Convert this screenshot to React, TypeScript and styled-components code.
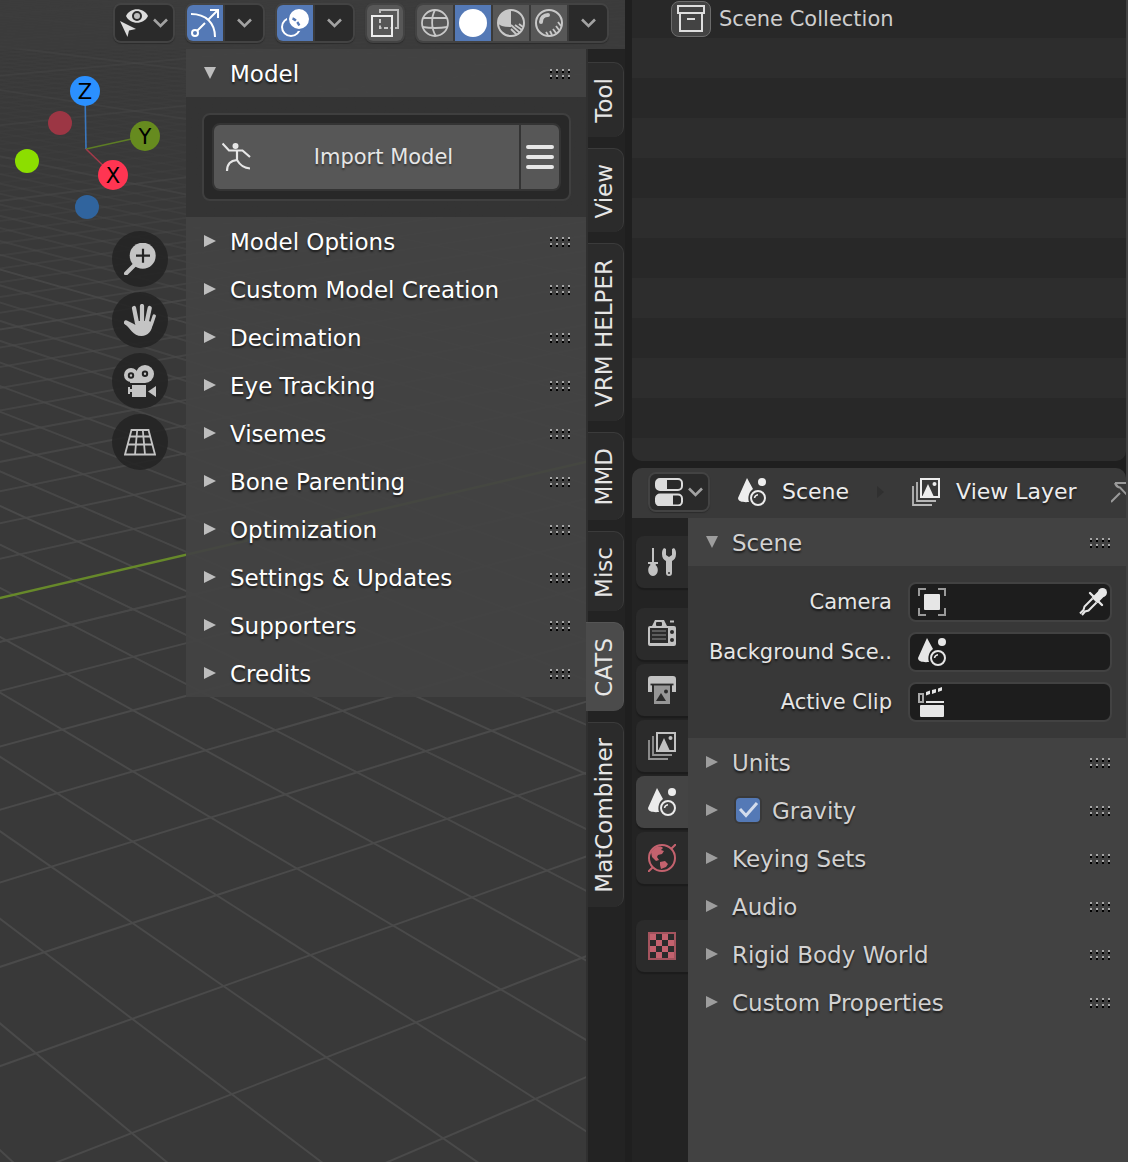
import React, { useState } from "react";
import styled, { createGlobalStyle, css } from "styled-components";

const Global = createGlobalStyle`
  *, *::before, *::after { box-sizing: border-box; }
  html, body { margin: 0; background: #1f1f1f; }
  body, button, input {
    font-family: "DejaVu Sans", "Liberation Sans", sans-serif;
  }
  button { margin: 0; padding: 0; border: 0; background: none; color: inherit; cursor: pointer; }
`;

const BLUE = "#5479b6";

/* ---------- layout ---------- */

const Screen = styled.div`
  display: grid;
  grid-template-columns: minmax(0, 625fr) minmax(0, 494fr);
  gap: 7px;
  min-height: 100vh;
  border-right: 2px solid #424242;
  background: #1f1f1f;
  overflow: hidden;
`;

const Viewport = styled.section`
  position: relative;
  display: flex;
  flex-direction: column;
  background: #393939;
  overflow: hidden;
`;

const Floor = styled.svg`
  position: absolute;
  inset: 0;
  width: 100%;
  height: 100%;
`;

const ViewportHeader = styled.header`
  position: relative;
  display: flex;
  justify-content: flex-end;
  gap: 10px;
  height: 49px;
  padding: 3px 16px 0 0;
  background: rgba(60, 60, 60, 0.8);
`;

const ViewportBody = styled.div`
  position: relative;
  display: flex;
  flex: 1;
`;

const Canvas = styled.div`
  position: relative;
  flex: 1;
  min-width: 0;
`;

const Gizmo = styled.svg`
  position: absolute;
  top: 21px;
  left: 10px;
  text {
    font: 21px "DejaVu Sans", sans-serif;
    text-anchor: middle;
    fill: #000;
  }
`;

const NavButtons = styled.div`
  position: absolute;
  top: 182px;
  right: 18px;
  display: flex;
  flex-direction: column;
  gap: 5px;
`;

const NavButton = styled.button`
  display: grid;
  place-items: center;
  width: 56px;
  height: 56px;
  border-radius: 50%;
  background: rgba(35, 35, 35, 0.86);
  color: #c4c4c4;
`;

/* ---------- header buttons ---------- */

const Group = styled.div`
  display: flex;
  flex: none;
  gap: 2px;
  height: 40px;
  border: 2px solid #434343;
  border-radius: 8px;
  background: #3a3a3a;
  overflow: hidden;
  box-shadow: 0 1px 1px #2c2c2c;
`;

type Tone = "dark" | "mid" | "on";
const tones = { dark: "#2a2a2a", mid: "#575757", on: BLUE };

const ToolButton = styled.button<{ $tone: Tone; $wide?: boolean }>`
  display: flex;
  align-items: center;
  justify-content: center;
  gap: 5px;
  width: ${(p) => (p.$wide ? 38 : 36)}px;
  background: ${(p) => tones[p.$tone]};
  color: ${(p) => (p.$tone === "on" ? "#fff" : "#c8c8c8")};
`;

const MenuButton = styled(ToolButton)`
  width: 58px;
  color: #dcdcdc;
`;

/* ---------- panels ---------- */

const Sidebar = styled.aside`
  width: 400px;
  flex: none;
`;

const Row = styled.div<{ $bright?: boolean }>`
  display: flex;
  align-items: center;
  height: 48px;
  padding: 2px 16px 0 18px;
  background: ${(p) => (p.$bright ? "rgba(67, 67, 67, 0.94)" : "#424242")};
  color: ${(p) => (p.$bright ? "#fff" : "#d2d2d2")};
`;

const Toggle = styled.button<{ $grow?: boolean }>`
  display: flex;
  align-items: center;
  gap: 14px;
  height: 46px;
  ${(p) => p.$grow && css`flex: 1;`}
  font-size: 23px;
  line-height: 46px;
  text-align: left;
  white-space: nowrap;
  text-shadow: 0 2px 2px rgba(0, 0, 0, 0.6);
  svg { margin-bottom: 2px; }
`;

const CheckLabel = styled.label`
  display: flex;
  align-items: center;
  flex: 1;
  gap: 12px;
  padding-left: 18px;
  font-size: 23px;
  line-height: 46px;
  text-shadow: 0 2px 2px rgba(0, 0, 0, 0.6);
`;

const CheckWrap = styled.span`
  position: relative;
  display: block;
  width: 24px;
  height: 24px;
  margin-bottom: 2px;
  svg { position: absolute; inset: 0; pointer-events: none; }
`;

const Checkbox = styled.input`
  appearance: none;
  display: block;
  width: 24px;
  height: 24px;
  margin: 0;
  border-radius: 4px;
  background: #575757;
  box-shadow: 0 0 0 2px #393939;
  &:checked { background: ${BLUE}; }
`;

const ImportBody = styled.div`
  height: 120px;
  padding: 16px 15px 16px 16px;
  background: rgba(52, 52, 52, 0.97);
`;

const ImportBox = styled.div`
  height: 88px;
  padding: 8px;
  border: 2px solid #3f3f3f;
  border-radius: 8px;
  background: #282828;
`;

const ImportGroup = styled.div`
  display: flex;
  gap: 2px;
  height: 68px;
  border: 2px solid #343434;
  border-radius: 8px;
  background: #343434;
  overflow: hidden;
`;

const ImportButton = styled.button`
  display: flex;
  align-items: center;
  flex: 1;
  padding: 0 4px 0 8px;
  background: #575757;
  color: #e6e6e6;
`;

const ImportText = styled.span`
  flex: 1;
  font-size: 21px;
  text-align: center;
  text-shadow: 0 2px 2px rgba(0, 0, 0, 0.4);
`;

const ListButton = styled.button`
  display: grid;
  place-items: center;
  width: 38px;
  background: #575757;
  color: #e6e6e6;
`;

/* ---------- vertical tabs ---------- */

const Strip = styled.nav`
  display: flex;
  flex-direction: column;
  flex: none;
  gap: 11px;
  width: 39px;
  padding-top: 13px;
  border-left: 2px solid #303030;
  background: #232323;
`;

const SideTab = styled.button<{ $active: boolean }>`
  width: 36px;
  padding: 15px 4px 14px 0;
  border-top: 1px solid #3b3b3b;
  border-right: 1px solid #3b3b3b;
  border-radius: 0 10px 10px 0;
  background: #2b2b2b;
  color: #e6e6e6;
  font-size: 23px;
  line-height: 30px;
  ${(p) =>
    p.$active &&
    css`
      width: 38px;
      margin-left: -2px;
      padding-left: 2px;
      background: #4b4b4b;
      border-color: #555;
    `}
  span {
    display: block;
    margin: 0 auto;
    writing-mode: vertical-rl;
    transform: rotate(180deg);
    white-space: nowrap;
  }
`;

/* ---------- right column ---------- */

const Column = styled.div`
  display: flex;
  flex-direction: column;
  gap: 7px;
`;

const Outliner = styled.section`
  height: 461px;
  border-radius: 0 0 10px 10px;
  background: repeating-linear-gradient(#282828 0 40px, #2d2d2d 40px 80px) 0 -2px / 100% 480px;
`;

const OutlinerRow = styled.div`
  display: flex;
  align-items: center;
  gap: 8px;
  height: 38px;
  padding-left: 39px;
  color: #cecece;
  font-size: 21px;
  line-height: 38px;
  white-space: nowrap;
`;

const CollectionBadge = styled.span`
  display: grid;
  place-items: center;
  width: 40px;
  height: 36px;
  border: 1px solid #6c6c6c;
  border-radius: 8px;
  background: #434343;
  color: #dedede;
`;

const Properties = styled.section`
  display: flex;
  flex-direction: column;
  flex: 1;
  border-radius: 10px 10px 0 0;
  background: #232323;
  overflow: hidden;
`;

const PropertiesHeader = styled.header`
  display: flex;
  align-items: center;
  height: 50px;
  padding: 0 0 2px 16px;
  background: #393939;
  color: #ededed;
  overflow: hidden;
`;

const Crumb = styled.span`
  display: flex;
  align-items: center;
  flex: none;
  gap: 16px;
  padding: 0 28px;
  font-size: 22px;
  line-height: 48px;
  white-space: nowrap;
  text-shadow: 0 2px 2px rgba(0, 0, 0, 0.6);
`;

const CrumbArrow = styled.svg`
  flex: none;
`;

const PinButton = styled.button`
  display: grid;
  flex: none;
  margin-left: 6px;
  padding-top: 8px;
  color: #9a9a9a;
`;

const PropertiesBody = styled.div`
  display: flex;
  flex: 1;
`;

const PropTabs = styled.nav`
  display: flex;
  flex-direction: column;
  flex: none;
  gap: 4px;
  width: 56px;
  padding: 18px 0 0 4px;
`;

const PropTab = styled.button<{ $active: boolean; $after?: number; $color?: string }>`
  display: grid;
  place-items: center;
  height: 52px;
  margin-bottom: ${(p) => p.$after ?? 0}px;
  border-radius: 8px 0 0 8px;
  background: ${(p) => (p.$active ? "#444444" : "#2b2b2b")};
  box-shadow: 0 2px 1px #1c1c1c;
  color: ${(p) => (p.$active ? "#ebebeb" : p.$color ?? "#c2c2c2")};
`;

const Panels = styled.div`
  flex: 1;
  min-width: 0;
  background: #424242;
`;

const Fields = styled.div`
  display: grid;
  grid-template-columns: minmax(0, 190fr) minmax(0, 204fr);
  gap: 10px 16px;
  padding: 16px 14px;
  background: #383838;
`;

const FieldLabel = styled.label`
  color: #e6e6e6;
  font-size: 21px;
  line-height: 40px;
  text-align: right;
  white-space: nowrap;
  text-shadow: 0 2px 2px rgba(0, 0, 0, 0.6);
`;

const Field = styled.div`
  display: flex;
  align-items: center;
  height: 40px;
  padding: 0 3px 0 8px;
  border: 2px solid #424242;
  border-radius: 8px;
  background: #1d1d1d;
  color: #e6e6e6;
  svg { flex: none; }
`;

const FieldInput = styled.input`
  flex: 1;
  min-width: 0;
  height: 32px;
  border: 0;
  background: none;
  color: #e6e6e6;
  font-size: 21px;
  outline: none;
`;

const PickButton = styled.button`
  display: grid;
  color: #e6e6e6;
`;

/* ---------- icons ---------- */

const Icon = ({ size = 28, children }: { size?: number; children: React.ReactNode }) => (
  <svg width={size} height={size} viewBox={`0 0 ${size} ${size}`} fill="none" aria-hidden="true">
    {children}
  </svg>
);

const Chevron = () => (
  <svg width="15" height="10" viewBox="0 0 15 10" fill="none" aria-hidden="true">
    <path d="M1 1.5L7.5 8L14 1.5" stroke="#a2a2a2" strokeWidth="2.6" />
  </svg>
);

const Triangle = ({ open, color }: { open?: boolean; color: string }) => (
  <svg width="12" height="12" viewBox="0 0 12 12" aria-hidden="true">
    <path d={open ? "M0 0H12L6 12Z" : "M0 0L12 6L0 12Z"} fill={color} />
  </svg>
);

const Grip = () => (
  <svg width="20" height="10" viewBox="0 0 20 10" shapeRendering="crispEdges" aria-hidden="true">
    {[0, 6, 12, 18].map((x) =>
      [0, 6].map((y) => (
        <g key={`${x}-${y}`}>
          <rect x={x} y={y} width="2" height="2" fill="#a6a6a6" />
          <rect x={x} y={y + 2} width="2" height="2" fill="#000" />
        </g>
      ))
    )}
  </svg>
);

const SelectabilityIcon = () => (
  <Icon>
    <path d="M6 7C10-2 24-2 28 7C24 16 10 16 6 7Z" fill="currentColor" />
    <circle cx="17" cy="7" r="4" fill="#bdbdbd" stroke="#2a2a2a" strokeWidth="2" />
    <path d="M0 12L16 20L9 21.5L7.5 28Z" fill="currentColor" />
  </Icon>
);

const GizmoIcon = () => (
  <Icon>
    <g stroke="currentColor" strokeWidth="2">
      <path d="M0 5C15 5 24 14 24 28M6.5 21.5L14 14M17 11L27 1M19 1H27V9" />
      <circle cx="4" cy="24" r="3" />
    </g>
  </Icon>
);

const OverlayIcon = () => (
  <Icon>
    <circle cx="10" cy="18" r="9" stroke="currentColor" strokeWidth="2" />
    <circle cx="18" cy="10" r="11" fill="currentColor" stroke={BLUE} strokeWidth="2" />
    <path d="M11.5 9.5Q16 11 18.5 17" stroke={BLUE} strokeWidth="2.4" strokeDasharray="4 2" />
  </Icon>
);

const XrayIcon = () => (
  <Icon>
    <path d="M9 4V1H27V19H24" stroke="#bcbcbc" strokeWidth="2" />
    <path d="M9 10V19H20" stroke="currentColor" strokeWidth="2" strokeDasharray="4 2.5" />
    <rect x="1" y="7" width="20" height="20" stroke="#ececec" strokeWidth="2" />
  </Icon>
);

const WireIcon = () => (
  <Icon>
    <g stroke="currentColor" strokeWidth="1.8">
      <circle cx="14" cy="14" r="13" />
      <path d="M2 9Q14 9 26 9M1.5 18Q14 20 26.5 18M14 1C10 8 10 20 15 27" />
    </g>
  </Icon>
);

const SolidIcon = () => (
  <Icon>
    <circle cx="14" cy="14" r="14" fill="currentColor" />
  </Icon>
);

const MaterialIcon = () => (
  <Icon>
    <circle cx="14" cy="14" r="13" stroke="currentColor" strokeWidth="2" />
    <path d="M14 18V1A13 13 0 0 0 1 14Q3 18 14 18Z" fill="currentColor" />
    <path d="M14 20L20 26M14 16L23 24M18 16L25 21M22 15L26 18" stroke="currentColor" strokeWidth="1.8" />
  </Icon>
);

const RenderedIcon = () => (
  <Icon>
    <circle cx="14" cy="14" r="13" stroke="currentColor" strokeWidth="2" />
    <path d="M6 13C6 9 9 6 13 6" stroke="currentColor" strokeWidth="4" strokeLinecap="round" />
    <path d="M11 23L13 26M15 22L17 26M18 20L21 24M21 17L24 21M23 13L26 17" stroke="currentColor" strokeWidth="1.8" />
  </Icon>
);

const ZoomIcon = () => (
  <Icon size={32}>
    <circle cx="18.7" cy="12.7" r="13" fill="currentColor" />
    <path d="M2 30.5L12 20.5" stroke="currentColor" strokeWidth="4" strokeLinecap="round" />
    <path d="M12 12.7H26M19 5.7V19.7" stroke="#232323" strokeWidth="2.2" />
  </Icon>
);

const HandIcon = () => (
  <Icon size={32}>
    <g stroke="currentColor" strokeLinecap="round" strokeWidth="4.2">
      <path d="M10 4L13 19M18 2L18 18M25.7 4L22.5 19" />
      <path d="M30.2 12L27.5 20" strokeWidth="3.4" />
      <path d="M2 18.5L9 22" />
    </g>
    <path d="M11 17H25L29 19C28 27 24 32 17.5 32C9 32 6 24 1 20L8 20.5L11.5 21Z" fill="currentColor" />
  </Icon>
);

const CameraIcon = () => (
  <Icon size={32}>
    <circle cx="7" cy="10" r="7" fill="currentColor" />
    <circle cx="21" cy="9" r="9" fill="currentColor" />
    <path d="M7 10H21V18H6Z" fill="currentColor" />
    <circle cx="7" cy="10.5" r="2.2" stroke="#232323" strokeWidth="2" />
    <circle cx="21" cy="8.7" r="2.2" stroke="#232323" strokeWidth="2" />
    <path d="M8 20H22V32H8V27H6V29H4V22H6V24H8ZM24 26.5L32 21V32Z" fill="currentColor" />
  </Icon>
);

const GridIcon = () => (
  <Icon size={32}>
    <path
      d="M7.5 4H24.5L31 28.5H1ZM6 10.5H26M3.5 18.5H28.5M13.2 4L11 28.5M18.8 4L21 28.5"
      stroke="currentColor"
      strokeWidth="1.8"
    />
  </Icon>
);

const PersonIcon = () => (
  <Icon size={30}>
    <circle cx="13.5" cy="4" r="3" fill="currentColor" />
    <path
      d="M.5 1.5L7 8.5H20.5L28 15M15 8.5V18M5 29C5 22 9 18.5 15 18C18 23 21 26 28 26.5"
      stroke="currentColor"
      strokeWidth="2.2"
    />
  </Icon>
);

const ListIcon = () => (
  <Icon>
    <path d="M2 4H26M2 14H26M2 24H26" stroke="currentColor" strokeWidth="4" strokeLinecap="round" />
  </Icon>
);

const CollectionIcon = () => (
  <Icon>
    <path d="M1 1H27V8H1ZM3 8V26H25V8M10 14H18" stroke="currentColor" strokeWidth="2" />
  </Icon>
);

const EditorIcon = () => (
  <Icon>
    <rect x="1" y="1" width="26" height="11" rx="4" stroke="#dcdcdc" strokeWidth="2" />
    <path d="M5 1H12V12H5Q1 12 1 8V5Q1 1 5 1Z" fill="#dcdcdc" />
    <rect x="1" y="16.5" width="26" height="11" rx="4" stroke="#dcdcdc" strokeWidth="2" />
    <path d="M5 16.5H18V27.5H5Q1 27.5 1 23.5V20.5Q1 16.5 5 16.5Z" fill="#dcdcdc" />
  </Icon>
);

const SceneIcon = () => (
  <Icon>
    <path d="M9 0L15 11C11 14 9.5 19 11 24C6 24.5 0 24 0 20Z" fill="currentColor" />
    <circle cx="24" cy="4" r="4" fill="currentColor" />
    <circle cx="20" cy="20" r="7" stroke="currentColor" strokeWidth="2" />
    <path d="M16.5 20Q17 17 20 16.7" stroke="currentColor" strokeWidth="1.5" />
  </Icon>
);

const LayersIcon = () => (
  <Icon>
    <path d="M5 4V23H24M1 8V27H20" stroke="currentColor" strokeWidth="1.8" opacity=".7" />
    <rect x="9" y="1" width="18" height="18" stroke="currentColor" strokeWidth="2" />
    <path d="M10 19L16 6L22 19Z" fill="currentColor" />
    <circle cx="22.5" cy="6" r="2" fill="currentColor" />
  </Icon>
);

const PinIcon = () => (
  <Icon>
    <path d="M0 20L9 11M4 1H20M4 1Q5 5 9 5.5L18 15M4 1L8 6" stroke="currentColor" strokeWidth="2" />
  </Icon>
);

const ToolIcon = () => (
  <Icon>
    <path d="M5 0V14" stroke="currentColor" strokeWidth="2" />
    <path d="M0 14H10V16H8L7.5 17C11.5 20 10 28 5 28C0 28-1.5 20 2.5 17L2 16H0Z" fill="currentColor" />
    <path
      d="M16 0C14 2 14 4 14 6C14 10 16 12 18 13V25A3 3 0 0 0 24 25V13C26 12 28 10 28 6C28 4 28 2 26 0L24 1V7L21 9L18 7V1Z"
      fill="currentColor"
    />
    <circle cx="21" cy="25" r="1" fill="#2b2b2b" />
  </Icon>
);

const RenderIcon = () => (
  <Icon>
    <path d="M2 6H4L7 0H16L19 6H26Q28 6 28 8V24Q28 26 26 26H2Q0 26 0 24V8Q0 6 2 6Z" fill="currentColor" />
    <path d="M22 1.5H26" stroke="currentColor" strokeWidth="2" />
    <rect x="8" y="2" width="6" height="4" rx="1" fill="#2b2b2b" />
    <rect x="2" y="8" width="18" height="15" fill="#2b2b2b" />
    <path d="M4 11H18M4 15H18M4 19H18" stroke="#5c5c5c" strokeWidth="2" />
    <circle cx="24" cy="12" r="2" fill="#2b2b2b" />
    <circle cx="24" cy="20" r="2" fill="#2b2b2b" />
  </Icon>
);

const OutputIcon = () => (
  <Icon>
    <path d="M3 0H25Q28 0 28 3V16H24V9H4V16H0V3Q0 0 3 0Z" fill="currentColor" />
    <path d="M2.5 8.5H25.5" stroke="#2b2b2b" strokeWidth="1.8" />
    <rect x="6" y="9.5" width="16" height="18.5" fill="#969696" />
    <path d="M8 25L13 17L18 25Z" fill="#2b2b2b" />
    <circle cx="18" cy="15.5" r="2" fill="#2b2b2b" />
  </Icon>
);

const WorldIcon = () => (
  <Icon>
    <circle cx="14" cy="14" r="13" stroke="currentColor" strokeWidth="2" />
    <path d="M0 28L5 23M23 5L28 0" stroke="currentColor" strokeWidth="2" />
    <path
      d="M3 8C6 3 12 1 15 4L13 6L16 7L14 10L10 11L9 13L11 16L8 17L4 13ZM12 18L17 17L20 20L18 23L13 25L12 21Z"
      fill="currentColor"
    />
  </Icon>
);

const TextureIcon = () => (
  <Icon>
    <rect x="1" y="1" width="26" height="26" stroke="#a4545e" strokeWidth="2" />
    {[0, 1, 2, 3].map((r) =>
      [0, 1, 2, 3].map((c) =>
        (r + c) % 2 === 0 ? (
          <rect key={`${r}${c}`} x={2 + c * 6} y={2 + r * 6} width="6" height="6" fill="currentColor" />
        ) : null
      )
    )}
  </Icon>
);

const ObjectIcon = () => (
  <Icon>
    <path d="M1 8V1H8M20 1H27V8M27 20V27H20M8 27H1V20" stroke="#9a9a9a" strokeWidth="2" />
    <rect x="6" y="6" width="16" height="16" rx="1" fill="currentColor" />
  </Icon>
);

const DropperIcon = () => (
  <Icon>
    <path d="M15.5 12.5L23 5" stroke="currentColor" strokeWidth="8" />
    <circle cx="23.5" cy="4.5" r="4.5" fill="currentColor" />
    <path d="M11 5L23 17" stroke="currentColor" strokeWidth="2.4" strokeLinecap="round" />
    <path
      d="M13.5 10.5L5.5 18.5L4.5 22L1 25.5M17.5 14.5L9.5 22.5L6 23.5L3 27"
      stroke="currentColor"
      strokeWidth="2"
    />
  </Icon>
);

const ClipIcon = () => (
  <Icon size={30}>
    <rect x="1" y="7" width="4" height="8" stroke="#a8a8a8" strokeWidth="2" />
    <path d="M8 5L12 3.5V7L8 8.5ZM14 3L18 2V5.5L14 7ZM20 1.5L24 0V3.5L20 5Z" fill="currentColor" />
    <path d="M8 15H26" stroke="currentColor" strokeWidth="2" />
    <rect x="2" y="18" width="24" height="12" rx="1" fill="currentColor" />
  </Icon>
);

/* ---------- 3D floor ---------- */

/* Perspective projection of floor cell (u, v) to screen pixels. */
function project(u: number, v: number): [number, number] {
  const w = 1 + 0.0285 * u + 0.0677 * v;
  const x = (323 + 261 * u - 229 * v) / w / 2.45;
  const y = (1404 - 58 * u - 113.7 * v) / w / 2.45 + 560;
  return [x, y];
}

const AXIS = 8;

function floorLines() {
  const lines: { key: string; a: [number, number]; b: [number, number]; o: number }[] = [];
  for (let i = -30; i <= 110; i++) {
    const major = (((i - AXIS) % 10) + 10) % 10 === 0;
    const fade = Math.max(0.12, 1 - Math.max(0, i - 5) / 30);
    const o = major ? Math.min(1, fade + 0.25) : fade;
    if (i !== AXIS) {
      const uMin = Math.max(-30, -(0.8 + 0.0677 * i) / 0.0285);
      lines.push({ key: `v${i}`, a: project(uMin, i), b: project(260, i), o });
    }
    const vMin = Math.max(-12, -(0.8 + 0.0285 * i) / 0.0677);
    lines.push({ key: `u${i}`, a: project(i, vMin), b: project(i, 160), o });
  }
  return lines;
}

const FLOOR = floorLines();
const AXIS_START = project(-30, AXIS);
const AXIS_END = project(60, AXIS);

const FloorGrid = () => (
  <Floor aria-hidden="true">
    {FLOOR.map((l) => (
      <line
        key={l.key}
        x1={l.a[0]}
        y1={l.a[1]}
        x2={l.b[0]}
        y2={l.b[1]}
        stroke="#4a4a4a"
        strokeWidth="2"
        opacity={l.o}
      />
    ))}
    <line
      x1={AXIS_START[0]}
      y1={AXIS_START[1]}
      x2={AXIS_END[0]}
      y2={AXIS_END[1]}
      stroke="#67892a"
      strokeWidth="2.5"
    />
  </Floor>
);

const AxisGizmo = () => (
  <Gizmo width="160" height="160" viewBox="10 70 160 160" role="img" aria-label="View orientation">
    <circle cx="60" cy="123" r="12" fill="#9c3644" />
    <circle cx="87" cy="207" r="12" fill="#30649e" />
    <path d="M86 149L85 91" stroke="#3a78c0" strokeWidth="1.6" />
    <path d="M86 149L145 136" stroke="#5d7d25" strokeWidth="1.6" />
    <path d="M86 149L113 175" stroke="#a33a4a" strokeWidth="1.6" />
    <circle cx="27" cy="161" r="12" fill="#8cde00" />
    <circle cx="85" cy="91" r="15" fill="#2b90ff" />
    <circle cx="145" cy="136" r="15" fill="#668b1f" />
    <circle cx="113" cy="175" r="15" fill="#ff3552" />
    <text x="85" y="99">Z</text>
    <text x="145" y="144">Y</text>
    <text x="113" y="183">X</text>
  </Gizmo>
);

/* ---------- app ---------- */

const SIDE_TABS = ["Tool", "View", "VRM HELPER", "MMD", "Misc", "CATS", "MatCombiner"];
const CATS_PANELS = [
  "Model Options",
  "Custom Model Creation",
  "Decimation",
  "Eye Tracking",
  "Visemes",
  "Bone Parenting",
  "Optimization",
  "Settings & Updates",
  "Supporters",
  "Credits",
];
const PROP_TABS = [
  { name: "Active Tool", icon: <ToolIcon />, after: 16 },
  { name: "Render", icon: <RenderIcon /> },
  { name: "Output", icon: <OutputIcon /> },
  { name: "View Layer", icon: <LayersIcon /> },
  { name: "Scene", icon: <SceneIcon /> },
  { name: "World", icon: <WorldIcon />, after: 32, color: "#c4626e" },
  { name: "Texture", icon: <TextureIcon />, color: "#c4626e" },
];

const PanelRow = ({ title, open, bright }: { title: string; open?: boolean; bright?: boolean }) => (
  <Row $bright={bright}>
    <Toggle $grow aria-expanded={!!open}>
      <Triangle open={open} color={bright ? "#bdbdbd" : "#9d9d9d"} />
      {title}
    </Toggle>
    <Grip />
  </Row>
);

export default function App() {
  const [sideTab, setSideTab] = useState("CATS");
  const [propTab, setPropTab] = useState("Scene");
  const [gravity, setGravity] = useState(true);

  return (
    <>
      <Global />
      <Screen>
        <Viewport>
          <FloorGrid />
          <ViewportHeader>
            <Group>
              <MenuButton $tone="dark" aria-label="Selectability and visibility">
                <SelectabilityIcon />
                <Chevron />
              </MenuButton>
            </Group>
            <Group>
              <ToolButton $tone="on" aria-label="Show gizmo"><GizmoIcon /></ToolButton>
              <ToolButton $tone="dark" $wide aria-label="Gizmo options"><Chevron /></ToolButton>
            </Group>
            <Group>
              <ToolButton $tone="on" aria-label="Show overlays"><OverlayIcon /></ToolButton>
              <ToolButton $tone="dark" $wide aria-label="Overlay options"><Chevron /></ToolButton>
            </Group>
            <Group>
              <ToolButton $tone="mid" aria-label="Toggle X-ray"><XrayIcon /></ToolButton>
            </Group>
            <Group>
              <ToolButton $tone="mid" aria-label="Wireframe"><WireIcon /></ToolButton>
              <ToolButton $tone="on" aria-label="Solid"><SolidIcon /></ToolButton>
              <ToolButton $tone="mid" aria-label="Material preview"><MaterialIcon /></ToolButton>
              <ToolButton $tone="mid" aria-label="Rendered"><RenderedIcon /></ToolButton>
              <ToolButton $tone="dark" $wide aria-label="Shading options"><Chevron /></ToolButton>
            </Group>
          </ViewportHeader>
          <ViewportBody>
            <Canvas>
              <AxisGizmo />
              <NavButtons>
                <NavButton aria-label="Zoom"><ZoomIcon /></NavButton>
                <NavButton aria-label="Pan"><HandIcon /></NavButton>
                <NavButton aria-label="Camera view"><CameraIcon /></NavButton>
                <NavButton aria-label="Toggle perspective"><GridIcon /></NavButton>
              </NavButtons>
            </Canvas>
            <Sidebar>
              <PanelRow title="Model" open bright />
              <ImportBody>
                <ImportBox>
                  <ImportGroup>
                    <ImportButton>
                      <PersonIcon />
                      <ImportText>Import Model</ImportText>
                    </ImportButton>
                    <ListButton aria-label="Import options"><ListIcon /></ListButton>
                  </ImportGroup>
                </ImportBox>
              </ImportBody>
              {CATS_PANELS.map((t) => (
                <PanelRow key={t} title={t} bright />
              ))}
            </Sidebar>
            <Strip>
              {SIDE_TABS.map((t) => (
                <SideTab key={t} $active={t === sideTab} onClick={() => setSideTab(t)}>
                  <span>{t}</span>
                </SideTab>
              ))}
            </Strip>
          </ViewportBody>
        </Viewport>

        <Column>
          <Outliner>
            <OutlinerRow>
              <CollectionBadge><CollectionIcon /></CollectionBadge>
              Scene Collection
            </OutlinerRow>
          </Outliner>
          <Properties>
            <PropertiesHeader>
              <Group>
                <MenuButton $tone="dark" aria-label="Editor type">
                  <EditorIcon />
                  <Chevron />
                </MenuButton>
              </Group>
              <Crumb><SceneIcon />Scene</Crumb>
              <CrumbArrow width="7" height="12" viewBox="0 0 7 12" aria-hidden="true">
                <path d="M0 0L7 6L0 12Z" fill="#303030" />
              </CrumbArrow>
              <Crumb><LayersIcon />View Layer</Crumb>
              <PinButton aria-label="Pin"><PinIcon /></PinButton>
            </PropertiesHeader>
            <PropertiesBody>
              <PropTabs>
                {PROP_TABS.map((t) => (
                  <PropTab
                    key={t.name}
                    aria-label={t.name}
                    $active={t.name === propTab}
                    $after={t.after}
                    $color={t.color}
                    onClick={() => setPropTab(t.name)}
                  >
                    {t.icon}
                  </PropTab>
                ))}
              </PropTabs>
              <Panels>
                <PanelRow title="Scene" open />
                <Fields>
                  <FieldLabel htmlFor="camera">Camera</FieldLabel>
                  <Field>
                    <ObjectIcon />
                    <FieldInput id="camera" />
                    <PickButton aria-label="Pick camera"><DropperIcon /></PickButton>
                  </Field>
                  <FieldLabel htmlFor="background">Background Sce..</FieldLabel>
                  <Field>
                    <SceneIcon />
                    <FieldInput id="background" />
                  </Field>
                  <FieldLabel htmlFor="clip">Active Clip</FieldLabel>
                  <Field>
                    <ClipIcon />
                    <FieldInput id="clip" />
                  </Field>
                </Fields>
                <PanelRow title="Units" />
                <Row>
                  <Toggle aria-expanded={false} aria-label="Gravity panel">
                    <Triangle color="#9d9d9d" />
                  </Toggle>
                  <CheckLabel>
                    <CheckWrap>
                      <Checkbox type="checkbox" checked={gravity} onChange={(e) => setGravity(e.target.checked)} />
                      {gravity && (
                        <svg width="24" height="24" viewBox="0 0 24 24" fill="none" aria-hidden="true">
                          <path d="M4 11L10 17.5L21 5" stroke="#d3dcec" strokeWidth="3" />
                        </svg>
                      )}
                    </CheckWrap>
                    Gravity
                  </CheckLabel>
                  <Grip />
                </Row>
                <PanelRow title="Keying Sets" />
                <PanelRow title="Audio" />
                <PanelRow title="Rigid Body World" />
                <PanelRow title="Custom Properties" />
              </Panels>
            </PropertiesBody>
          </Properties>
        </Column>
      </Screen>
    </>
  );
}
